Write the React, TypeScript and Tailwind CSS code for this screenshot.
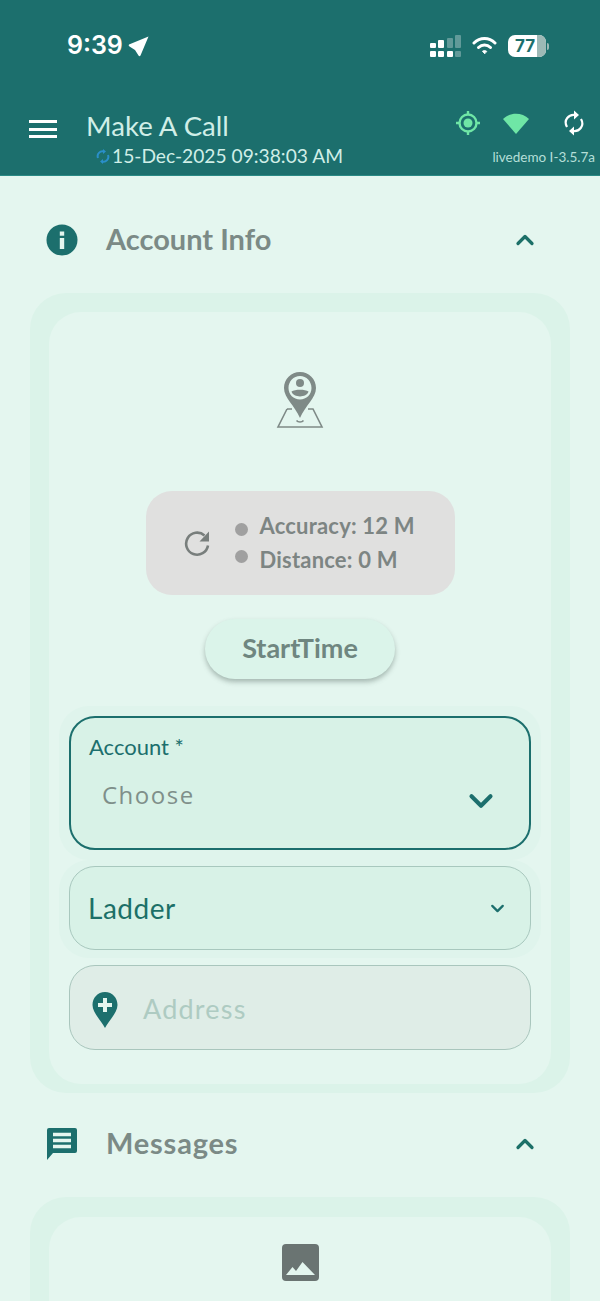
import { ChevronDown, ChevronUp } from "lucide-react";

const titleFont = "font-['Lato','Noto_Sans',sans-serif]";

function SectionHeader({ icon, title, titleClass }: { icon: React.ReactNode; title: string; titleClass?: string }) {
  return (
    <div className="flex h-[40px] items-center pl-[46px] pr-[61px]">
      <div className="flex w-[32px] justify-center">{icon}</div>
      <span className={`ml-[28px] -mt-[2px] flex-1 text-[29px] font-bold text-[#7b8a86] ${titleClass ?? ""}`}>{title}</span>
      <ChevronUp size={28} strokeWidth={2.8} className="text-[#1c7068]" />
    </div>
  );
}

function StatusBar() {
  return (
    <div className="flex h-[90px] items-center justify-between pl-[67px] pr-[51px] pt-[2px] text-white">
      <div className="flex items-center gap-[5px] font-['Inter',sans-serif] text-[25px] font-semibold">
        <span>9:39</span>
        <svg width="21" height="21" viewBox="0 0 21 21" fill="currentColor">
          <path d="M20.500 0.500 L1 8.500 Q0 9.500 1.500 10.500 L7 14 L10.500 19.500 Q11.500 21 12.500 19.500 Z" />
        </svg>
      </div>
      <div className="flex items-center gap-[11px]">
        <svg width="31" height="22" viewBox="0 0 31 22">
          <g fill="#ffffff">
            <rect x="0" y="8" width="6" height="5" rx="1" />
            <rect x="8" y="5" width="6" height="8" rx="1" />
            <rect x="0" y="16" width="6" height="6" rx="1" />
            <rect x="8" y="16" width="6" height="6" rx="1" />
            <rect x="17" y="16" width="6" height="6" rx="1" />
          </g>
          <g fill="#ffffff" opacity="0.3">
            <rect x="17" y="3" width="6" height="10" rx="1" />
            <rect x="25" y="0" width="6" height="13" rx="1" />
            <rect x="25" y="16" width="6" height="6" rx="1" />
          </g>
        </svg>
        <svg width="25" height="20" viewBox="0 0 25 20" fill="none" stroke="#ffffff" strokeWidth="3" strokeLinecap="round">
          <path d="M2 7 C8 1 17 1 23 7" />
          <path d="M6.500 11.500 C10 8 15 8 18.500 11.500" />
          <path d="M12.500 17.500 L10.500 15.200 C11.500 14.400 13.500 14.400 14.500 15.200 Z" fill="#ffffff" strokeWidth="1" />
        </svg>
        <div className="flex items-center">
          <div className="relative flex h-[22px] w-[38px] items-center overflow-hidden rounded-[7px] bg-[#ffffff]">
            <div className="absolute inset-y-0 right-0 w-[9px] bg-[#9db9b6]" />
            <span className="relative ml-[7px] font-['Inter',sans-serif] text-[17px] font-bold leading-none text-[#1c6f6d]">77</span>
          </div>
          <div className="ml-[1px] h-[7px] w-[2px] rounded-r-full bg-[#9db9b6]" />
        </div>
      </div>
    </div>
  );
}

function AppBar() {
  return (
    <div className="flex h-[86px] border-b border-[#2a8a85]">
      <div className="flex w-[86px] justify-center pt-[30px]">
        <div className="flex h-[18px] w-[28px] flex-col justify-between">
          <div className="h-[3px] bg-white" />
          <div className="h-[3px] bg-white" />
          <div className="h-[3px] bg-white" />
        </div>
      </div>
      <div className="flex-1 pt-[18px]">
        <div className="text-[27.600px] font-normal leading-[36px] text-[#d0eee7]">Make A Call</div>
        <div className="ml-[10px] flex items-center text-[19.200px] leading-[24px] text-[#d0eee7]">
          <svg width="14" height="17" viewBox="0 0 14 17" fill="none" stroke="#2a8fc9" strokeWidth="2" className="mr-[2px]">
            <path d="M2 10 C0.500 6 4 2.500 8 3.500" />
            <path d="M7 1 L10 3.500 L7 6" fill="#2a8fc9" stroke="none" />
            <path d="M12 7 C13.500 11 10 14.500 6 13.500" />
            <path d="M7 11 L4 13.500 L7 16" fill="#2a8fc9" stroke="none" />
          </svg>
          15-Dec-2025 09:38:03 AM
        </div>
      </div>
      <div className="flex w-[150px] flex-col items-end pr-[5px] pt-[20px]">
        <div className="flex items-center pr-[9px]">
          <svg width="26" height="26" viewBox="0 0 26 26" fill="none" stroke="#6fe6a6" strokeWidth="2.400">
            <circle cx="13" cy="13" r="8.500" />
            <circle cx="13" cy="13" r="4.500" fill="#6fe6a6" stroke="none" />
            <path d="M13 1 V4.500 M13 21.500 V25 M1 13 H4.500 M21.500 13 H25" />
          </svg>
          <svg width="28" height="22" viewBox="0 0 28 22" fill="#6fe6a6" className="ml-[21px]">
            <path d="M1 7 C8 0 20 0 27 7 L14 22 Z" />
          </svg>
          <svg width="24" height="26" viewBox="0 0 24 26" fill="none" stroke="#ffffff" strokeWidth="2.200" className="ml-[32px]">
            <path d="M5 17 C1 10 7 4 13 5" />
            <path d="M12 0.500 L17 5 L12 9.500" fill="#ffffff" stroke="none" />
            <path d="M19 9 C23 16 17 22 11 21" />
            <path d="M12 16.500 L7 21 L12 25.500" fill="#ffffff" stroke="none" />
          </svg>
        </div>
        <div className="mt-[13px] text-[13.500px] leading-[16px] text-[#b5dfd8]">livedemo I-3.5.7a</div>
      </div>
    </div>
  );
}

function LocationPin() {
  return (
    <svg width="48" height="58" viewBox="0 0 48 58" fill="none" className="text-[#7f8a87]">
      <path d="M11 38 H16 M32 38 H37 L46 56 H2 L11 38" stroke="currentColor" strokeWidth="1.600" />
      <path
        d="M24 1 C15 1 8 8 8 17 C8 27 19 35 24 47 C29 35 40 27 40 17 C40 8 33 1 24 1 Z M24 5 C30.500 5 35.500 10.500 35.500 17 C35.500 23.500 30.500 28.500 24 28.500 C17.500 28.500 12.500 23.500 12.500 17 C12.500 10.500 17.500 5 24 5 Z"
        fill="currentColor"
        fillRule="evenodd"
      />
      <circle cx="24" cy="12" r="4" fill="currentColor" />
      <path d="M15.500 20.500 C19 18 29 18 32.500 20.500 C30.500 27 17.500 27 15.500 20.500 Z" fill="currentColor" />
      <path d="M20.500 49.500 C22 51.500 26 51.500 27.500 49.500" stroke="currentColor" strokeWidth="1.600" />
    </svg>
  );
}

function AccuracyPanel() {
  return (
    <div className="mt-[62px] flex h-[104px] w-[309px] items-center rounded-[26px] bg-[#e0e0df] pl-[37px]">
      <svg width="28" height="28" viewBox="0 0 28 28" fill="none">
        <path d="M21.500 6.500 A11 11 0 1 0 25 16.500" stroke="#787e7c" strokeWidth="2.600" />
        <path d="M26 2.500 V12.500 H16.500 Z" fill="#787e7c" />
      </svg>
      <div className="ml-[24px] flex flex-col gap-[5px]">
        <div className="flex h-[28px] items-center">
          <span className="mt-[6px] h-[13px] w-[13px] rounded-full bg-[#a0a0a0]" />
          <span className="ml-[12px] -mt-[3px] text-[22px] font-bold tracking-[0.2px] text-[#7d8583]">Accuracy: 12 M</span>
        </div>
        <div className="flex h-[28px] items-center">
          <span className="mb-[6px] h-[13px] w-[13px] rounded-full bg-[#a0a0a0]" />
          <span className="ml-[12px] text-[22px] font-bold tracking-[0.2px] text-[#7d8583]">Distance: 0 M</span>
        </div>
      </div>
    </div>
  );
}

function FormFields() {
  return (
    <div className="mt-[27px] flex w-full flex-col px-[10px]">
      <div className="rounded-[30px] bg-[#dff4ec] p-[10px]">
        <div className="h-[134px] rounded-[26px] border-2 border-[#1c6f6d] bg-[#d8f2e7] pl-[18px] pr-[29px] pt-[14px]">
          <div className="text-[22px] leading-[30px] text-[#1c6f6d]">Account *</div>
          <div className="flex items-start justify-between pl-[13px] pt-[15px]">
            <span className="font-['Open_Sans',sans-serif] text-[24px] tracking-[1.500px] text-[#7f8f8a]">Choose</span>
            <ChevronDown size={38} strokeWidth={2.600} className="mt-[5px] text-[#1c6f6d]" />
          </div>
        </div>
      </div>
      <div className="rounded-[30px] bg-[#dff4ec] px-[10px] pb-[8px] pt-[6px]">
        <div className="flex h-[84px] items-center justify-between rounded-[26px] border border-[#a8c8be] bg-[#d8f2e7] pl-[18px] pr-[22px]">
          <span className="text-[28px] tracking-[0.500px] text-[#1c7068]">Ladder</span>
          <ChevronDown size={21} strokeWidth={2.600} className="text-[#1c6f6d]" />
        </div>
      </div>
      <div className="px-[10px] pt-[7px]">
        <div className="flex h-[85px] items-center rounded-[26px] border border-[#a9c6bd] bg-[#dfede7] pl-[22px] pt-[4px]">
          <svg width="26" height="36" viewBox="0 0 26 36">
            <path d="M13 0 C5.500 0 0.500 6 0.500 13 C0.500 21 9 28 13 36 C17 28 25.500 21 25.500 13 C25.500 6 20.500 0 13 0 Z" fill="#1c6f6d" />
            <path d="M13 6 V20 M6 13 H20" stroke="#e4f6ef" strokeWidth="4" />
          </svg>
          <span className="ml-[25px] text-[27px] tracking-[1.200px] text-[#aecbc2]">Address</span>
        </div>
      </div>
    </div>
  );
}

export default function App() {
  return (
    <div className={`${titleFont} h-[1301px] w-[600px] overflow-hidden bg-[#e4f6ef]`}>
      <div className="bg-[#1c6f6d]">
        <StatusBar />
        <AppBar />
      </div>

      <div className="pt-[44px]">
        <SectionHeader
          title="Account Info"
          icon={
            <svg width="32" height="32" viewBox="0 0 32 32">
              <circle cx="16" cy="16" r="15.500" fill="#1c6f6d" />
              <rect x="13.800" y="14" width="4.400" height="11" fill="#e4f6ef" />
              <rect x="13.800" y="7.500" width="4.400" height="4.200" fill="#e4f6ef" />
            </svg>
          }
        />
      </div>

      <div className="mx-[30px] mt-[33px] rounded-[36px] bg-[#dbf3e9] px-[19px] pb-[9px] pt-[19px]">
        <div className="flex h-[772px] flex-col items-center rounded-[32px] bg-[#e4f6ef] pt-[59px]">
          <LocationPin />
          <AccuracyPanel />
          <div className="mt-[24px] flex h-[60px] w-[190px] items-center justify-center rounded-full bg-[#dbf4ea] text-[27px] font-bold text-[#6f8680] shadow-[0_3px_5px_rgba(90,110,105,0.45)]">
            <span className="-mt-[2px]">StartTime</span>
          </div>
          <FormFields />
        </div>
      </div>

      <div className="pt-[31px]">
        <SectionHeader
          title="Messages"
          titleClass="tracking-[0.800px]"
          icon={
            <svg width="32" height="34" viewBox="0 0 32 34">
              <path d="M3 1 H29 A2 2 0 0 1 31 3 V24 A2 2 0 0 1 29 26 H7 L1 33 V3 A2 2 0 0 1 3 1 Z" fill="#1c6f6d" />
              <path d="M7 7.500 H25 M7 13.500 H25 M7 19.500 H25" stroke="#e4f6ef" strokeWidth="3.500" />
            </svg>
          }
        />
      </div>

      <div className="mx-[30px] mt-[33px] rounded-[36px] bg-[#dbf3e9] px-[19px] pt-[20px]">
        <div className="flex h-[300px] justify-center rounded-[32px] bg-[#e4f6ef] pt-[27px]">
          <svg width="37" height="37" viewBox="0 0 37 37">
            <rect width="37" height="37" rx="4" fill="#6a7472" />
            <path d="M4 31 L10.500 23 L14 27 L20.500 18 L33 31 Z" fill="#e4f6ef" />
          </svg>
        </div>
      </div>
    </div>
  );
}
